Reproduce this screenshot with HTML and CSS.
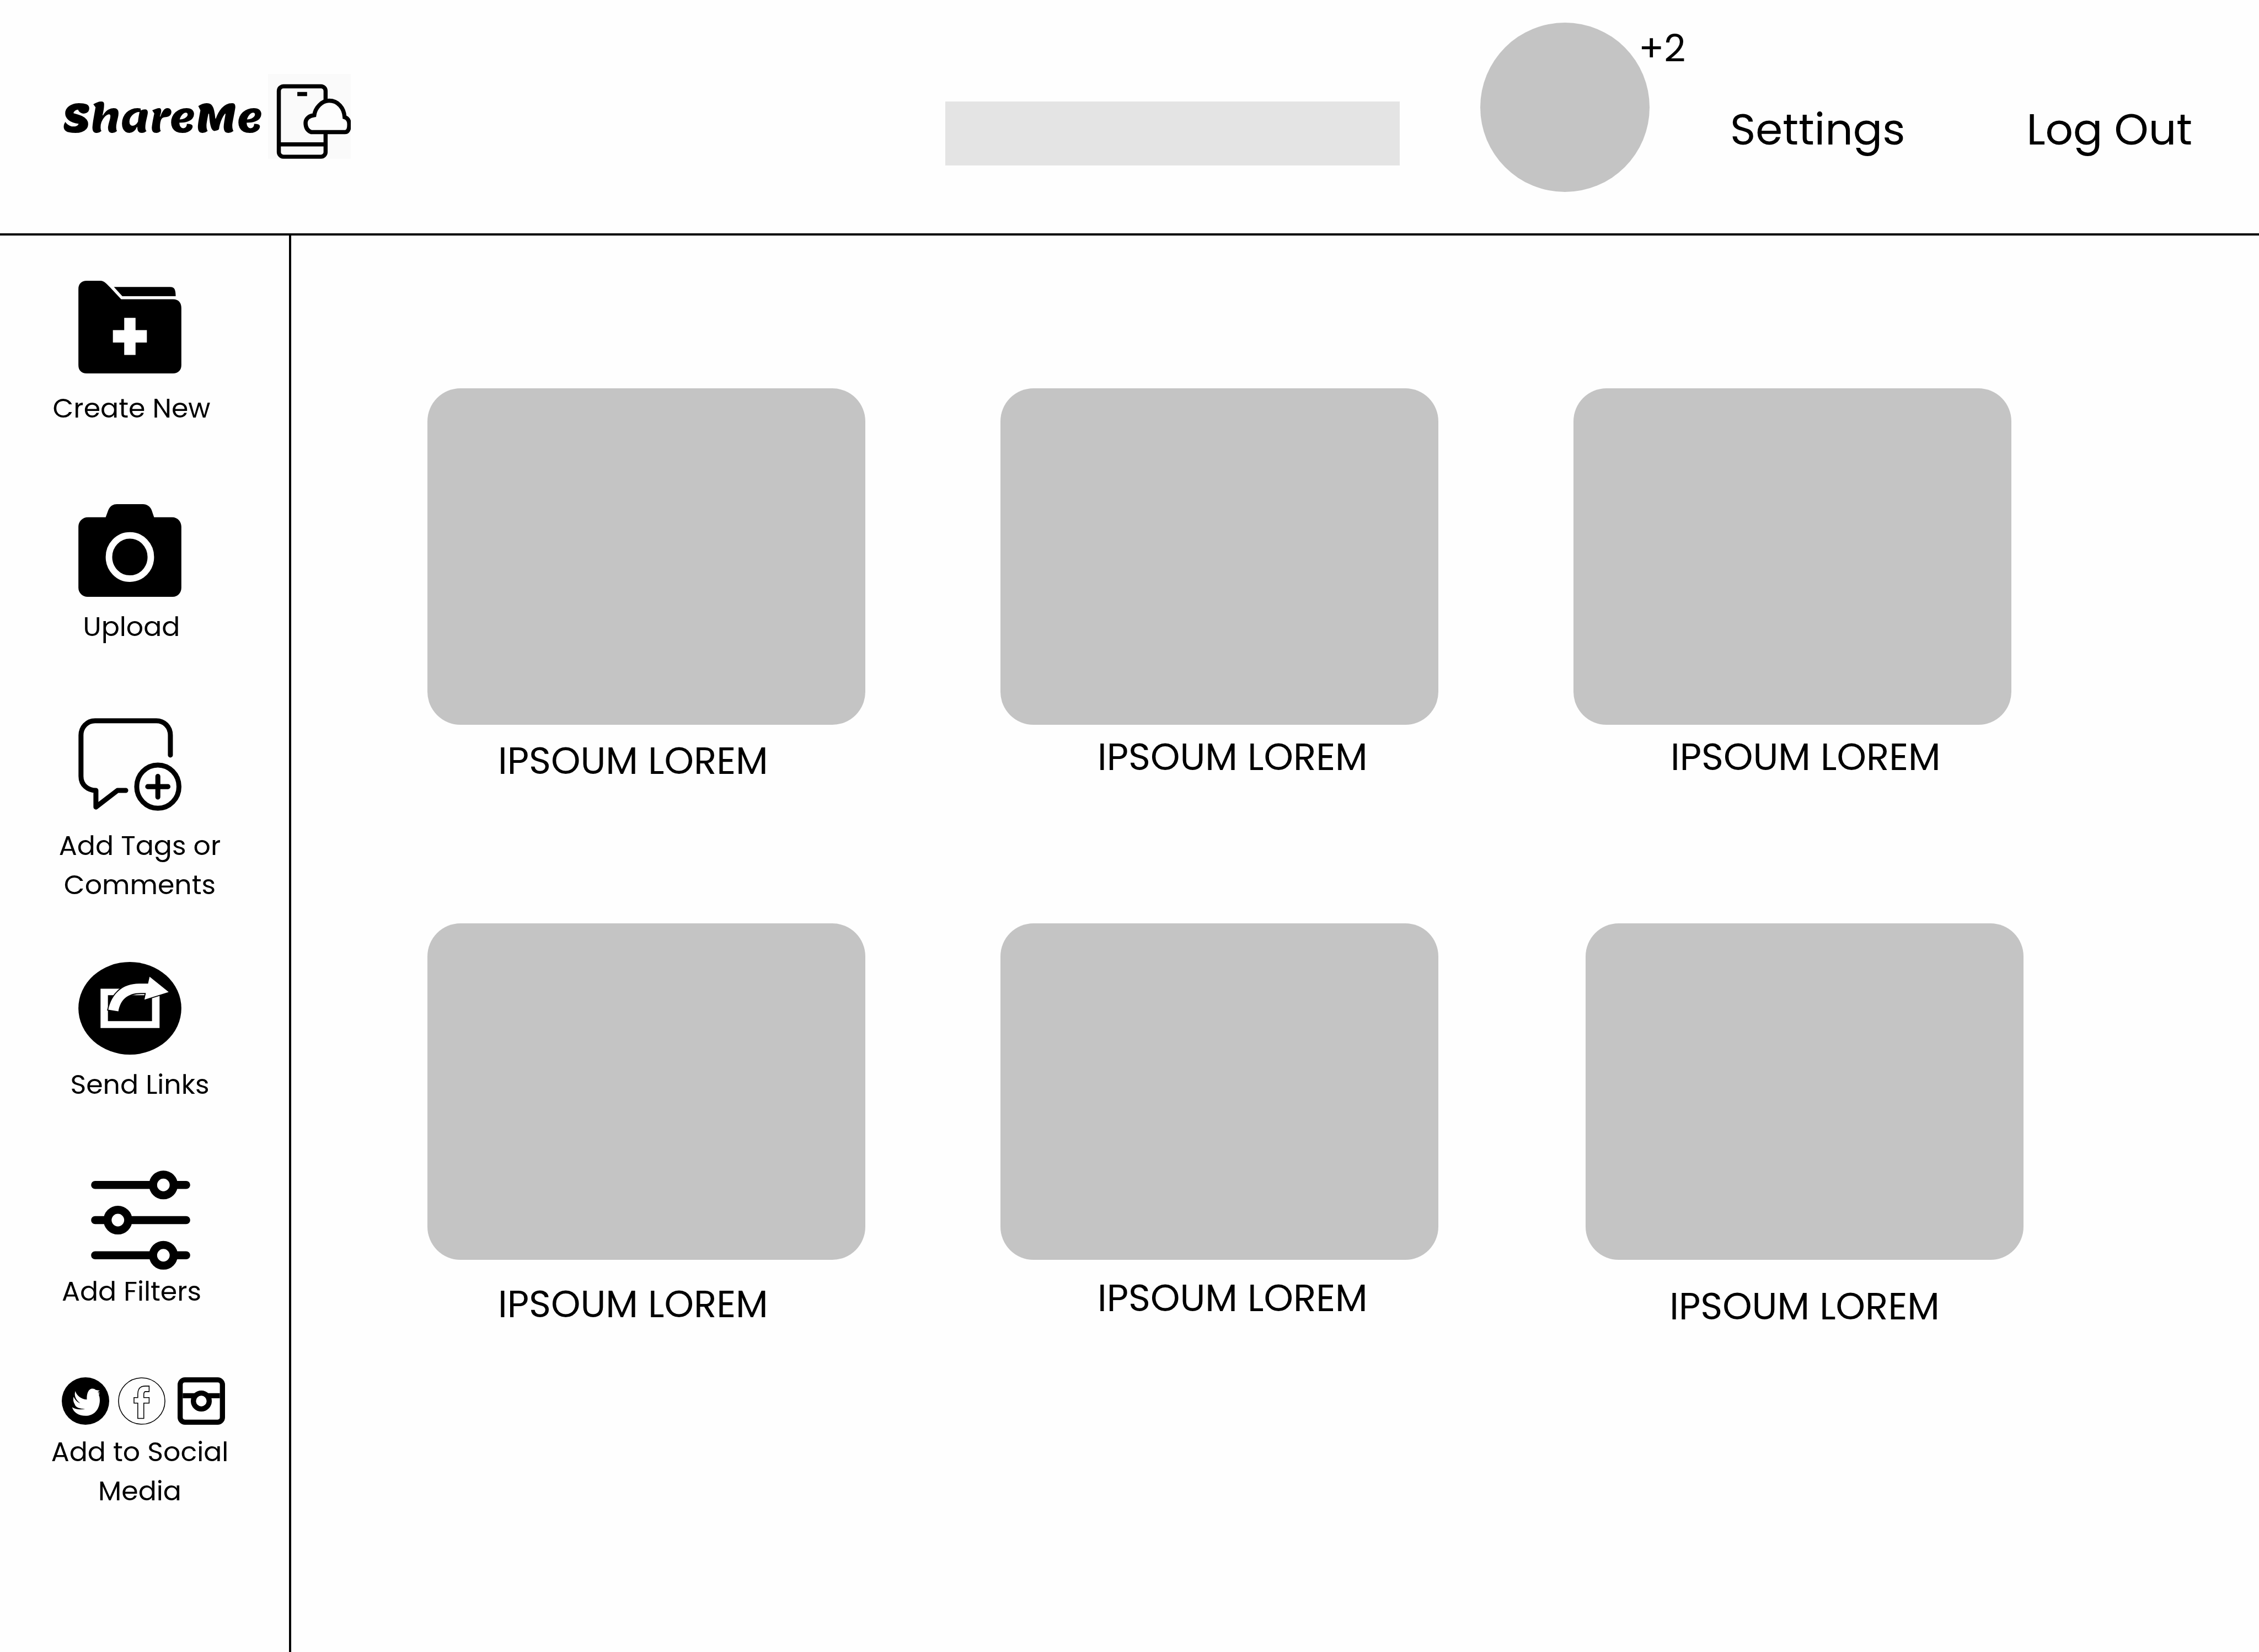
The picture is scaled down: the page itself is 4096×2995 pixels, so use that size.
FILE: index.html
```html
<!DOCTYPE html>
<html lang="en">
<head>
  <meta charset="utf-8">
  <title>ShareMe</title>
  <link rel="stylesheet" href="styles.css">
</head>
<body>
  <header class="topbar">
    <a class="brand" href="#">
      <span class="brand-name">ShareMe</span>
      <svg class="brand-icon" viewBox="0 0 161 165" aria-hidden="true">
        <rect width="161" height="165" fill="#fafafa"/>
        <g fill="none" stroke="#000" stroke-width="8">
          <rect x="21" y="24" width="91" height="137" rx="9"/>
          <path d="M21 137H112M57 39H76"/>
          <path fill="#fdfdfd" d="M84 113C76 110 73 103 73 95C73 87 80 81 90 80C92 66 104 52 119 52C136 52 148 66 149 84C156 86 158 92 158 98C158 107 156 113 150 113Z"/>
        </g>
      </svg>
    </a>
    <input class="search" type="search" aria-label="Search">
    <div class="account">
      <div class="avatar"></div>
      <span class="badge">+2</span>
    </div>
    <nav class="links">
      <a href="#">Settings</a>
      <a href="#">Log Out</a>
    </nav>
  </header>

  <div class="layout">
    <nav class="sidebar">
      <button class="tool" type="button">
        <svg class="tool-icon" viewBox="216 132 600 540" aria-hidden="true">
          <path d="M216 180C216 150 235 132 264 132H345C365 132 380 149 400 170L465 240H768C800 240 816 262 816 290V624C816 655 795 672 768 672H264C235 672 216 655 216 624Z"/>
          <path d="M423 168H750C778 168 782 185 783 222H472Z"/>
          <path fill="#fff" d="M483 348H549V420H615V492H549V564H483V492H417V420H483Z"/>
        </svg>
        <span class="tool-label label-far">Create New</span>
      </button>

      <button class="tool tool-upload" type="button">
        <svg class="tool-icon" viewBox="216 108 600 540" aria-hidden="true">
          <path d="M216 240C216 208 240 184 272 184H375L390 143C400 118 420 108 440 108H592C615 108 635 122 643 143L657 184H762C795 184 816 210 816 240V595C816 625 795 648 765 648H270C240 648 216 625 216 595Z"/>
          <ellipse cx="516" cy="416" rx="122" ry="126" fill="none" stroke="#fff" stroke-width="38"/>
        </svg>
        <span class="tool-label">Upload</span>
      </button>

      <button class="tool tool-tags" type="button">
        <svg class="tool-icon" viewBox="216 96 600 540" aria-hidden="true">
          <g fill="none" stroke="#000" stroke-width="29" stroke-linecap="round" stroke-linejoin="round">
            <path d="M752 311V196C752 145 715 111 670 111H313C265 111 231 150 231 196V434C231 485 270 517 318 517V614L444 517H492"/>
            <ellipse cx="679" cy="495" rx="123" ry="126"/>
            <path d="M679 435V556M620 495H738"/>
          </g>
        </svg>
        <span class="tool-label label-far label-wide">Add Tags or<br>Comments</span>
      </button>

      <button class="tool tool-send" type="button">
        <svg class="tool-icon" viewBox="216 102 600 540" aria-hidden="true">
          <ellipse cx="516" cy="372" rx="300" ry="270"/>
          <path fill="#fff" fill-rule="evenodd" d="M345 258H689V487H345ZM388 296V447H645V296Z"/>
          <path fill="#fff" stroke="#000" stroke-width="12" paint-order="stroke" d="M390 380C410 290 470 228 570 228H622L631 188L742 277L601 321L609 283H580C500 283 460 325 449 390Z"/>
        </svg>
        <span class="tool-label label-wide">Send Links</span>
      </button>

      <button class="tool tool-filters" type="button">
        <svg class="tool-icon icon-filters" viewBox="288 114 576 576" aria-hidden="true">
          <g fill="#fff" stroke="#000" stroke-width="47" stroke-linecap="round">
            <path d="M312 198H840M312 402H840M312 606H840"/>
            <circle cx="708" cy="198" r="60"/>
            <circle cx="444" cy="402" r="60"/>
            <circle cx="708" cy="606" r="60"/>
          </g>
        </svg>
        <span class="tool-label label-tight">Add Filters</span>
      </button>

      <button class="tool tool-social" type="button">
        <span class="social-icons">
          <svg class="social-icon" viewBox="120 84 276 276" aria-hidden="true">
            <circle cx="258" cy="222" r="138"/>
            <path fill="#fff" d="M266 213C264 180 275 150 298 150C306 150 312 153 317 157L341 162L328 171L343 174L332 179L341 182L335 185C340 195 342 210 341 225C337 275 305 308 258 308C220 308 190 290 180 258C200 272 230 273 256 268C225 268 200 260 195 240C187 228 185 210 189 197C197 215 208 228 227 235C202 216 190 190 199 164C207 192 235 212 266 213Z"/>
          </svg>
          <svg class="social-icon" viewBox="444 84 276 276" aria-hidden="true">
            <g fill="none" stroke="#000" stroke-width="5">
              <circle cx="582" cy="222" r="135"/>
              <path d="M625 135V167H606C597 167 594 173 594 183V202H625V234H594V323H559V234H537V202H559V180C560 148 575 135 602 135Z"/>
            </g>
          </svg>
          <svg class="social-icon icon-camera" viewBox="792 84 276 276" aria-hidden="true">
            <g fill="#fff" stroke="#000" stroke-width="30">
              <rect x="807" y="99" width="246" height="246" rx="28"/>
              <path d="M822 191H1038"/>
              <circle cx="930" cy="222" r="46"/>
            </g>
          </svg>
        </span>
        <span class="tool-label label-wide">Add to Social<br>Media</span>
      </button>
    </nav>

    <main class="gallery">
      <figure class="item">
        <div class="thumb"></div>
        <figcaption class="caption caption-start">IPSOUM LOREM</figcaption>
      </figure>
      <figure class="item">
        <div class="thumb"></div>
        <figcaption class="caption caption-high">IPSOUM LOREM</figcaption>
      </figure>
      <figure class="item">
        <div class="thumb"></div>
        <figcaption class="caption caption-high">IPSOUM LOREM</figcaption>
      </figure>
      <figure class="item">
        <div class="thumb"></div>
        <figcaption class="caption caption-start caption-low">IPSOUM LOREM</figcaption>
      </figure>
      <figure class="item">
        <div class="thumb"></div>
        <figcaption class="caption">IPSOUM LOREM</figcaption>
      </figure>
      <figure class="item item-shifted">
        <div class="thumb"></div>
        <figcaption class="caption caption-center">IPSOUM LOREM</figcaption>
      </figure>
    </main>
  </div>
</body>
</html>
```
FILE: styles.css
```css
* {
  box-sizing: border-box;
}

body {
  margin: 0;
  min-height: 100vh;
  display: flex;
  flex-direction: column;
  background: #fefefe;
  color: #000;
  font-family: Poppins, "Noto Sans", sans-serif;
}

a {
  color: inherit;
  text-decoration: none;
}

/* Top bar */
.topbar {
  display: flex;
  align-items: flex-start;
  height: 427px;
  padding: 0 121px 0 113px;
  border-bottom: 4px solid #000;
}

.brand {
  display: flex;
  align-items: center;
  gap: 10px;
  padding-top: 134px;
}

.brand-name {
  padding-top: 4px;
  font: 400 72px/96px Lemon, Lemonada, sans-serif;
}

.brand-icon {
  width: 150px;
  height: 154px;
}

.search {
  width: 824px;
  height: 116px;
  margin: 184px 0 0 auto;
  padding: 0 32px;
  border: 0;
  border-radius: 0;
  background: #e4e4e4;
  font: 49px/71px Poppins, "Noto Sans", sans-serif;
}

.account {
  position: relative;
  margin: 41px 146px 0;
}

.avatar {
  width: 307px;
  height: 307px;
  border-radius: 50%;
  background: #c4c4c4;
}

.badge {
  position: absolute;
  top: -3px;
  left: 287px;
  font-size: 68px;
  line-height: 102px;
}

.links {
  display: flex;
  gap: 220px;
  padding-top: 175px;
  font-size: 79px;
  line-height: 120px;
  white-space: nowrap;
}

/* Sidebar */
.layout {
  flex: 1;
  display: flex;
}

.sidebar {
  flex: none;
  width: 528px;
  padding-top: 82px;
  border-right: 4px solid #000;
}

.tool {
  display: flex;
  flex-direction: column;
  align-items: flex-start;
  width: 100%;
  padding: 0;
  border: 0;
  background: none;
  color: inherit;
  font: 49px/71px Poppins, "Noto Sans", sans-serif;
  text-align: center;
  cursor: pointer;
}

.tool-upload {
  margin-top: 138px;
}

.tool-tags {
  margin-top: 130px;
}

.tool-send {
  margin-top: 104px;
}

.tool-filters,
.tool-social {
  margin-top: 120px;
}

.tool-icon {
  width: 187px;
  height: 168px;
  margin-left: 142px;
}

.icon-filters {
  width: 180px;
  height: 180px;
  margin-left: 165px;
}

.tool-label {
  width: 477px;
  margin-top: 19px;
}

.label-wide {
  width: 507px;
}

.label-far {
  margin-top: 28px;
}

.label-tight {
  margin-top: 4px;
}

.social-icons {
  display: flex;
  gap: 16px;
  margin-left: 112px;
}

.social-icon {
  width: 86px;
  height: 86px;
}

.icon-camera {
  margin-left: 6px;
}

.social-icons + .tool-label {
  margin-top: 14px;
}

/* Gallery */
.gallery {
  flex: 1;
  display: grid;
  grid-template-columns: repeat(3, minmax(0, 1fr));
  align-content: start;
  gap: 243px 245px;
  padding: 277px 449px 0 247px;
}

.item {
  margin: 0;
}

.item-shifted {
  margin: 0 -22px 0 22px;
}

.thumb {
  aspect-ratio: 794 / 610;
  border-radius: 60px;
  background: #c4c4c4;
}

.caption {
  padding: 19px 0 0 176px;
  font-size: 68px;
  line-height: 102px;
}

.caption-start {
  padding: 15px 0 0 128px;
}

.caption-high {
  padding-top: 8px;
}

.caption-center {
  padding: 34px 0 0;
  text-align: center;
}

.caption-low {
  padding-top: 30px;
}
```
